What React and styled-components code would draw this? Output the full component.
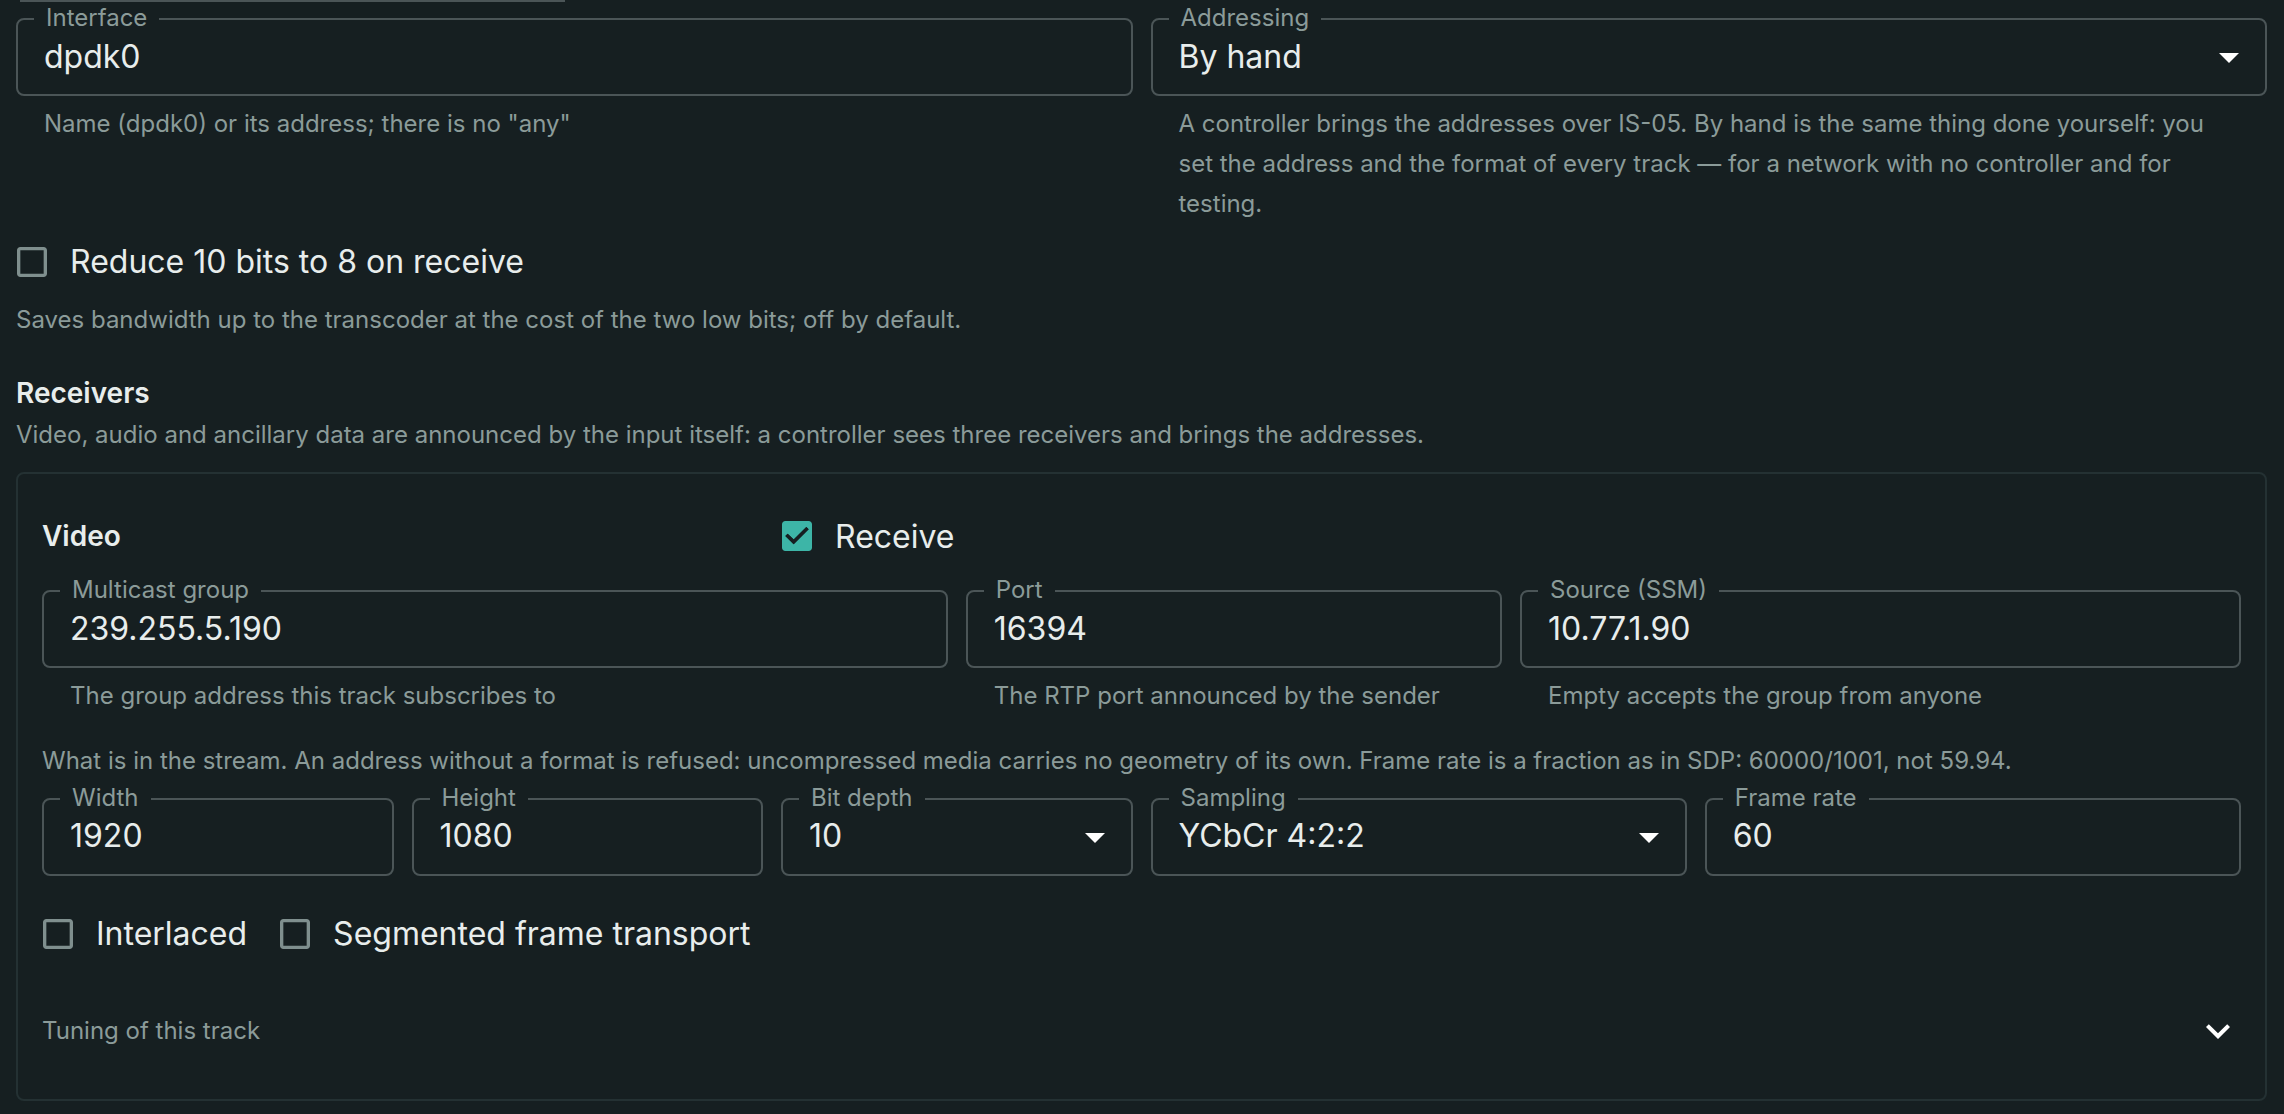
import React from "react";
import styled, { createGlobalStyle } from "styled-components";

const BG = "#161f21";
const LINE = "#4b5557";
const MUTED = "#8b9b99";
const TEXT = "#e8edec";

const Global = createGlobalStyle`
  html, body { margin: 0; padding: 0; background: ${BG}; }
  body { font-family: Inter, "Noto Sans", "Liberation Sans", sans-serif; color: ${TEXT}; }
  * { box-sizing: border-box; }
`;

const Page = styled.div`
  padding: 0 17px 0 16px;
  min-height: 1114px;
  background: ${BG};
`;

const PrevEdge = styled.div`
  margin-left: 4px;
  width: 545px;
  height: 2px;
  background: ${LINE};
`;

const Grid = styled.div`
  display: grid;
  grid-template-columns: repeat(${(p) => p.$cols || 12}, minmax(0, 1fr));
  column-gap: 18px;
  align-items: ${(p) => p.$align || "start"};
  margin-top: ${(p) => p.$mt || 0}px;
  height: ${(p) => (p.$h ? `${p.$h}px` : "auto")};
`;

const Cell = styled.div`
  grid-column: span ${(p) => p.$span || 1};
  display: flex;
  flex-direction: column;
  min-width: 0;
`;

const Outlined = styled.div`
  position: relative;
  height: 78px;
  border: 2px solid ${LINE};
  border-radius: 8px;
  display: flex;
  align-items: center;
  padding: 0 26px 2px 26px;
`;

const FloatLabel = styled.span`
  position: absolute;
  top: -14px;
  left: 16px;
  padding: 0 12px;
  font-size: 24px;
  line-height: 24px;
  color: ${MUTED};
  background: ${BG};
  white-space: nowrap;
`;

const Value = styled.span`
  font-size: 32px;
  color: ${TEXT};
  white-space: nowrap;
`;

const ArrowIcon = styled.svg`
  width: 48px;
  height: 48px;
  margin-left: auto;
  margin-right: -14px;
  margin-bottom: -2px;
  fill: #ffffff;
  flex: none;
`;

const Helper = styled.div`
  margin: 8px 28px 0 28px;
  font-size: 24px;
  line-height: 39.84px;
  color: ${MUTED};
`;

const Caption = styled.div`
  font-size: 24px;
  line-height: 39.84px;
  color: ${MUTED};
  margin-top: ${(p) => p.$mt || 0}px;
`;

const SectionTitle = styled.div`
  font-size: 28px;
  font-weight: 600;
  line-height: 44px;
  color: ${TEXT};
  margin-top: ${(p) => p.$mt || 0}px;
`;

const CheckLabel = styled.label`
  display: inline-flex;
  align-items: center;
  height: 76px;
  margin-left: -22px;
  margin-right: 32px;
  cursor: pointer;
`;

const CheckButton = styled.span`
  display: inline-flex;
  padding: 18px;
  svg { width: 40px; height: 40px; display: block; }
`;

const CheckText = styled.span`
  font-size: 32px;
  color: ${TEXT};
  white-space: nowrap;
`;

const Row = styled.div`
  display: flex;
  align-items: center;
  margin-top: ${(p) => p.$mt || 0}px;
`;

const Panel = styled.section`
  margin-top: 17px;
  border: 2px solid #243133;
  border-radius: 8px;
  padding: 24px;
`;

const Tuning = styled.div`
  margin-top: 15px;
  height: 88px;
  display: flex;
  align-items: center;
  justify-content: space-between;
  font-size: 24px;
  color: ${MUTED};
  svg { width: 48px; height: 48px; fill: #ffffff; margin-right: -1px; }
`;

function Checkbox({ checked, label }) {
  return (
    <CheckLabel>
      <CheckButton>
        {checked ? (
          <svg viewBox="0 0 24 24">
            <path
              fill="#3db5a7"
              fillRule="evenodd"
              d="M19 3H5c-1.11 0-2 .9-2 2v14c0 1.1.89 2 2 2h14c1.11 0 2-.9 2-2V5c0-1.1-.89-2-2-2zm-9 14l-5-5 1.41-1.41L10 14.17l7.59-7.59L19 8l-9 9z"
            />
            <path fill={BG} d="M10 17l-5-5 1.41-1.41L10 14.17l7.59-7.59L19 8l-9 9z" />
          </svg>
        ) : (
          <svg viewBox="0 0 24 24">
            <path
              fill="#7f8f8e"
              d="M19 5v14H5V5h14m0-2H5c-1.11 0-2 .9-2 2v14c0 1.1.89 2 2 2h14c1.11 0 2-.9 2-2V5c0-1.1-.89-2-2-2z"
            />
          </svg>
        )}
      </CheckButton>
      <CheckText>{label}</CheckText>
    </CheckLabel>
  );
}

function Field({ label, value, select, helper, span }) {
  return (
    <Cell $span={span}>
      <Outlined>
        <FloatLabel>{label}</FloatLabel>
        <Value>{value}</Value>
        {select && (
          <ArrowIcon viewBox="0 0 24 24">
            <path d="M7 10l5 5 5-5z" />
          </ArrowIcon>
        )}
      </Outlined>
      {helper && <Helper>{helper}</Helper>}
    </Cell>
  );
}

export default function App() {
  return (
    <>
      <Global />
      <Page>
        <PrevEdge />
        <Grid $cols={2} $mt={16}>
          <Field label="Interface" value="dpdk0" helper={'Name (dpdk0) or its address; there is no "any"'} />
          <Field
            label="Addressing"
            value="By hand"
            select
            helper="A controller brings the addresses over IS-05. By hand is the same thing done yourself: you set the address and the format of every track — for a network with no controller and for testing."
          />
        </Grid>
        <Row>
          <Checkbox label="Reduce 10 bits to 8 on receive" />
        </Row>
        <Caption>Saves bandwidth up to the transcoder at the cost of the two low bits; off by default.</Caption>
        <SectionTitle $mt={32}>Receivers</SectionTitle>
        <Caption>
          Video, audio and ancillary data are announced by the input itself: a controller sees three receivers and brings the addresses.
        </Caption>
        <Panel>
          <Grid $h={76} $align="center">
            <Cell $span={4}>
              <SectionTitle>Video</SectionTitle>
            </Cell>
            <Cell $span={8}>
              <Row>
                <Checkbox checked label="Receive" />
              </Row>
            </Cell>
          </Grid>
          <Grid $mt={16}>
            <Field span={5} label="Multicast group" value="239.255.5.190" helper="The group address this track subscribes to" />
            <Field span={3} label="Port" value="16394" helper="The RTP port announced by the sender" />
            <Field span={4} label="Source (SSM)" value="10.77.1.90" helper="Empty accepts the group from anyone" />
          </Grid>
          <Caption $mt={25}>
            What is in the stream. An address without a format is refused: uncompressed media carries no geometry of its own. Frame rate is a fraction as in SDP: 60000/1001, not 59.94.
          </Caption>
          <Grid $mt={17}>
            <Field span={2} label="Width" value="1920" />
            <Field span={2} label="Height" value="1080" />
            <Field span={2} label="Bit depth" value="10" select />
            <Field span={3} label="Sampling" value="YCbCr 4:2:2" select />
            <Field span={3} label="Frame rate" value="60" />
          </Grid>
          <Row $mt={20}>
            <Checkbox label="Interlaced" />
            <Checkbox label="Segmented frame transport" />
          </Row>
          <Tuning>
            <span>Tuning of this track</span>
            <svg viewBox="0 0 24 24">
              <path d="M16.59 8.59 12 13.17 7.41 8.59 6 10l6 6 6-6z" />
            </svg>
          </Tuning>
        </Panel>
      </Page>
    </>
  );
}
